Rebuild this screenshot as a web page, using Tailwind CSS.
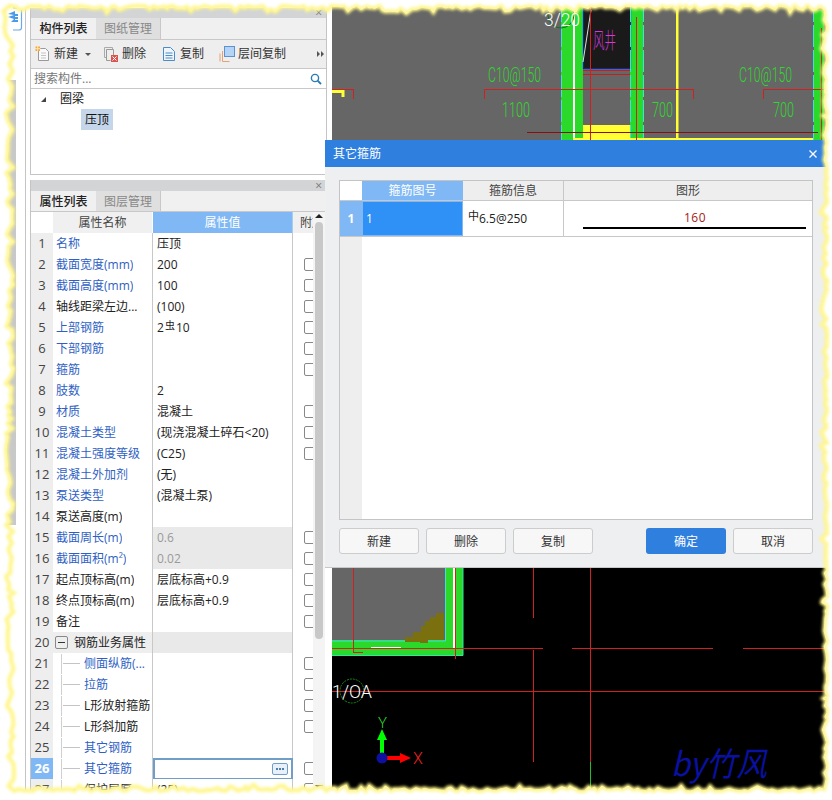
<!DOCTYPE html>
<html lang="en">
<head>
<meta charset="UTF-8">
<title>其它箍筋</title>
<script src="https://cdn.jsdelivr.net/npm/@tailwindcss/browser@4"></script>
</head>
<body class="bg-white">
<div class="relative w-[832px] h-[800px] overflow-hidden bg-white flex text-[12px] text-[#222] font-['Open_Sans','Noto_Sans_CJK_SC',sans-serif]">

    <!-- left strip -->
    <div class="w-[30px] shrink-0">
        <div class="w-[26px] h-[800px] border-r border-[#c4c4c4] flex flex-col">
            <svg width="25" height="32" viewBox="0 0 25 32" class="shrink-0">
                <path d="M13 8h6q2.500 0 2.500 2.500v17q0 2.500-2.500 2.500h-6" fill="#fff" stroke="#6aa8e8" stroke-width="1.200"/>
                <path d="M8 14l7-3v3h3v2h-3v1h3v2h-3v1h3v2h-7l3-3-6-2 6-2z" fill="#4a9be8"/>
            </svg>
            <div class="mt-[48px] w-[16px] h-[445px] bg-[#c8c8c8]"></div>
        </div>
    </div>

    <!-- panels -->
    <div class="w-[297px] shrink-0 pt-[8px] flex flex-col">
        <!-- component list -->
        <div class="h-[167px] border-x border-b border-[#c4c4c4] flex flex-col">
            <div class="h-[10px] bg-[#d2d4d6] flex items-center justify-end pr-[4px] text-[#777] text-[12px] leading-none">×</div>
            <div class="h-[22px] bg-[#f0f0f0] border-b border-[#c8c8c8] flex">
                <div class="w-[65px] flex items-center justify-center font-medium text-[#222]">构件列表</div>
                <div class="w-[65px] flex items-center justify-center bg-[#dfdfdf] text-[#888] border-r border-[#c8c8c8]">图纸管理</div>
            </div>
            <div class="h-[29px] bg-[#eeeeee] border-b border-[#c8c8c8] flex items-center pl-[4px] text-[#333] whitespace-nowrap">
                <svg width="16" height="16" viewBox="0 0 16 16" class="shrink-0">
                    <path d="M3.500 2.500h7l3 3v9h-10z" fill="#fafafa" stroke="#9a9a9a"/>
                    <path d="M6 7h5M6 9.500h5M6 12h5" stroke="#c4c4c4"/>
                    <rect x="0.500" y="0.500" width="4.500" height="4.500" fill="#f2a640"/>
                    <path d="M2.700 0v5.500M0 2.700h5.500" stroke="#ffe9b0"/>
                </svg>
                <span class="ml-[3px]">新建</span>
                <span class="ml-[7px] w-0 h-0 border-x-[3px] border-x-transparent border-t-[3px] border-t-[#555]"></span>
                <svg width="16" height="16" viewBox="0 0 16 16" class="ml-[12px] shrink-0">
                    <path d="M1.500 1.500h8v2M1.500 1.500v10h2" fill="none" stroke="#aaa"/>
                    <path d="M3.500 3.500h7v6M3.500 3.500v11h4" fill="none" stroke="#999"/>
                    <rect x="8" y="9" width="7" height="7" fill="#d9534f"/>
                    <path d="M9.500 10.500l4 4M13.500 10.500l-4 4" stroke="#fff"/>
                </svg>
                <span class="ml-[3px]">删除</span>
                <svg width="14" height="16" viewBox="0 0 14 16" class="ml-[16px] shrink-0">
                    <path d="M1.500 1.500h7l4 4v9h-11z" fill="#eef5fc" stroke="#4a8cc4"/>
                    <path d="M3.500 7h7M3.500 9.500h7M3.500 12h7" stroke="#4a8cc4"/>
                </svg>
                <span class="ml-[4px]">复制</span>
                <svg width="16" height="16" viewBox="0 0 16 16" class="ml-[15px] shrink-0">
                    <path d="M3.500 5v10.500h7" fill="none" stroke="#e8a070"/>
                    <path d="M1 7.500v8" stroke="#e8a070"/>
                    <rect x="5.500" y="0.500" width="10" height="10" fill="#b5d3f5" stroke="#5a94d0"/>
                </svg>
                <span class="ml-[3px]">层间复制</span>
                <span class="ml-[31px] flex gap-[1px]">
                    <span class="w-0 h-0 border-y-[3px] border-y-transparent border-l-[3px] border-l-[#555]"></span>
                    <span class="w-0 h-0 border-y-[3px] border-y-transparent border-l-[3px] border-l-[#555]"></span>
                </span>
            </div>
            <div class="h-[20px] bg-white border-b border-[#c8c8c8] flex items-center justify-between pl-[3px] pr-[4px] pt-[1px] text-[#777]">
                <span>搜索构件...</span>
                <svg width="12" height="12" viewBox="0 0 12 12">
                    <circle cx="5" cy="5" r="3.600" fill="none" stroke="#2a7ab5" stroke-width="1.400"/>
                    <path d="M7.600 7.600l3.400 3.400" stroke="#2a7ab5" stroke-width="1.800"/>
                </svg>
            </div>
            <div class="flex-1 bg-white">
                <div class="h-[20px] flex items-center pl-[10px]">
                    <span class="w-0 h-0 border-l-[5px] border-l-transparent border-b-[5px] border-b-[#444]"></span>
                    <span class="ml-[14px] text-[#111]">圈梁</span>
                </div>
                <div class="pl-[50px]">
                    <span class="inline-flex items-center h-[21px] px-[4px] bg-[#c6d6ea] text-[#111]">压顶</span>
                </div>
            </div>
        </div>

        <!-- property list -->
        <div class="mt-[5px] mr-[2px] border-l border-[#c4c4c4] flex flex-col">
            <div class="h-[11px] bg-[#d2d4d6] flex items-center justify-end pr-[3px] text-[#777] text-[12px] leading-none">×</div>
            <div class="h-[21px] bg-[#f0f0f0] border-b border-[#c8c8c8] flex">
                <div class="w-[65px] pt-[1px] flex items-center justify-center font-medium text-[#222]">属性列表</div>
                <div class="w-[65px] pt-[1px] flex items-center justify-center bg-[#dfdfdf] text-[#888] border-r border-[#c8c8c8]">图层管理</div>
            </div>
            <div class="flex">
                <div class="w-[282px] shrink-0">
                    <div class="h-[21px] grid grid-cols-[22px_100px_140px_20px] bg-white">
                        <div></div>
                        <div class="pt-[1px] bg-[#f0f0f0] border-r border-white flex items-center justify-center text-[#444]">属性名称</div>
                        <div class="pt-[1px] bg-[#7fb8f5] border-r border-[#a8cdf3] flex items-center justify-center text-white">属性值</div>
                        <div class="pt-[1px] bg-[#f0f0f0] overflow-hidden pl-[7px] flex items-center whitespace-nowrap text-[#444]">附加</div>
                    </div>
                    <div id="rows"></div>
                </div>
                <div class="w-[12px] bg-[#f4f4f4] flex flex-col items-center relative">
                    <span class="mt-[2px] w-0 h-0 border-x-[4px] border-x-transparent border-b-[4px] border-b-[#222]"></span>
                    <div class="mt-[4px] w-[8px] h-[417px] rounded-[4px] bg-[#c8c8c8]"></div>
                    <span class="mt-[146px] w-0 h-0 border-x-[4px] border-x-transparent border-t-[4px] border-t-[#222]"></span>
                </div>
            </div>
        </div>
    </div>

    <!-- CAD canvas -->
    <div class="ml-[5px] flex-1 bg-black">
        <svg width="500" height="800" viewBox="332 0 500 800" class="block" font-family="Roboto, sans-serif" font-weight="300">
            <rect x="332" y="0" width="500" height="140" fill="#666"/>
            <rect x="332" y="560" width="113" height="80" fill="#666"/>

            <!-- shaft -->
            <rect x="561" y="0" width="22" height="140" fill="#2ad92a"/>
            <rect x="630" y="0" width="13" height="140" fill="#2ad92a"/>
            <rect x="583" y="0" width="47" height="68" fill="#1a1a1a"/>
            <path d="M583.500 0v68.500h47V0" fill="none" stroke="#1020c0" stroke-width="1.200"/>
            <rect x="583" y="70" width="47" height="1" fill="#c02020"/>
            <rect x="583" y="74" width="47" height="1" fill="#c02020"/>
            <rect x="583" y="125" width="47" height="15" fill="#ffff33"/>
            <rect x="573" y="0" width="2" height="140" fill="#fff"/>
            <path d="M561.500 0v140M630.500 0v140M643.500 0v140M813.500 0v140" stroke="#3fe0e0" stroke-dasharray="22 3"/>
            <rect x="814" y="10" width="10" height="130" fill="#2ad92a"/>
            <path d="M583 62l8-52" stroke="#ddd"/>
            <rect x="676" y="0" width="2.500" height="140" fill="#ffff33"/>
            <rect x="573" y="138" width="240" height="2" fill="#ffff33"/>
            <g fill="#d02020">
                <rect x="590" y="0" width="1" height="140"/>
                <rect x="636" y="17" width="1" height="123"/>
                <rect x="821" y="28" width="1" height="112"/>
                <rect x="527" y="132" width="291" height="1" fill="#8a1010"/>
                <rect x="484" y="89" width="210" height="1"/>
                <rect x="484" y="89" width="1" height="10"/>
                <rect x="693" y="89" width="1" height="10"/>
                <rect x="763" y="89" width="69" height="1"/>
                <rect x="763" y="89" width="1" height="10"/>
                <rect x="332" y="89" width="22" height="1"/>
                <rect x="353" y="89" width="1" height="10"/>
            </g>
            <path d="M332 91.500h11v5.500" fill="none" stroke="#ffff33" stroke-width="3"/>
            <g fill="#2fd82f" font-size="21">
                <text x="488" y="82" textLength="53" lengthAdjust="spacingAndGlyphs">C10@150</text>
                <text x="739" y="82" textLength="53" lengthAdjust="spacingAndGlyphs">C10@150</text>
                <text x="502" y="117" textLength="28" lengthAdjust="spacingAndGlyphs">1100</text>
                <text x="652" y="117" textLength="21" lengthAdjust="spacingAndGlyphs">700</text>
                <text x="773" y="117" textLength="21" lengthAdjust="spacingAndGlyphs">700</text>
            </g>
            <text x="593" y="48" fill="#d838d8" font-size="22" font-family="Noto Sans CJK SC" font-weight="300" textLength="23" lengthAdjust="spacingAndGlyphs">风井</text>
            <circle cx="561" cy="15" r="13" fill="none" stroke="#1c6c1c"/>
            <text x="544" y="26" fill="#fff" font-size="19" textLength="36" lengthAdjust="spacingAndGlyphs">3/20</text>

            <!-- lower part -->
            <path d="M445 568h18v87.500H332V640h113z" fill="#2ad92a"/>
            <path d="M445.500 568v73H332" fill="none" stroke="#3fe0e0"/>
            <rect x="453" y="568" width="2" height="80" fill="#fff"/>
            <path d="M332 655.500h131V568" fill="none" stroke="#30e8a0"/>
            <rect x="371" y="647" width="30" height="2" fill="#fff"/>
            <path d="M405 642v-5h8v-5h8v-6h4v-5h5v-4h6v-4h8v27h-16v3h-8v-1z" fill="#7a7010"/>
            <g fill="#d02020">
                <rect x="353" y="568" width="1" height="85"/>
                <rect x="353" y="652" width="10" height="1"/>
                <rect x="455" y="568" width="1" height="91"/>
                <rect x="533" y="568" width="1" height="50"/>
                <rect x="533" y="650" width="1" height="112"/>
                <rect x="590" y="568" width="1" height="194"/>
                <rect x="332" y="648" width="211" height="1"/>
                <rect x="572" y="648" width="141" height="1"/>
                <rect x="743" y="648" width="82" height="1"/>
                <rect x="332" y="691" width="493" height="1"/>
            </g>
            <rect x="590" y="762" width="1" height="38" fill="#20c020"/>
            <circle cx="590.500" cy="800" r="10" fill="none" stroke="#188018"/>

            <circle cx="352" cy="691" r="12" fill="none" stroke="#1c8c1c" stroke-dasharray="2 1"/>
            <text x="332" y="698" fill="#fff" font-size="19" textLength="40" lengthAdjust="spacingAndGlyphs">1/OA</text>

            <!-- axes -->
            <path d="M382 758v-22" stroke="#0f0" stroke-width="4"/>
            <path d="M382 729l5 11h-10z" fill="#0f0"/>
            <path d="M382 758h20" stroke="#f00" stroke-width="4"/>
            <path d="M411 758l-11-5v10z" fill="#f00"/>
            <circle cx="382" cy="758" r="5.500" fill="#1010a0"/>
            <text x="378" y="728" fill="#2fd82f" font-size="15">Y</text>
            <text x="413" y="764" fill="#f02020" font-size="16">X</text>

            <text x="671" y="776" fill="#0a10a0" font-size="33" font-style="italic" font-family="Noto Sans CJK SC" font-weight="400" textLength="96" lengthAdjust="spacingAndGlyphs">by竹风</text>
        </svg>
    </div>

    <!-- dialog -->
    <div class="absolute left-[325px] top-[140px] w-[507px] h-[428px] bg-[#eeeff0] border-b border-[#c8c8c8] flex flex-col">
        <div class="h-[27px] bg-[#2f7fdf] flex items-center justify-between pl-[8px] pr-[14px] text-white">
            <span>其它箍筋</span>
            <svg width="10" height="10" viewBox="0 0 10 10"><path d="M1.500 1.500l7 7M8.500 1.500l-7 7" stroke="#fff" stroke-width="1.300"/></svg>
        </div>
        <div class="pt-[13px] pl-[14px] pr-[19px]">
            <div class="w-[474px] h-[340px] border border-[#c4c4c4] bg-white flex flex-col">
                <div class="h-[20px] grid grid-cols-[22px_101px_101px_1fr] border-b border-[#c8c8c8]">
                    <div class="bg-white"></div>
                    <div class="bg-[#7fb8f5] flex items-center justify-center text-white">箍筋图号</div>
                    <div class="bg-[#eeeeee] border-r border-[#c8c8c8] flex items-center justify-center text-[#444]">箍筋信息</div>
                    <div class="bg-[#eeeeee] flex items-center justify-center text-[#444]">图形</div>
                </div>
                <div class="h-[36px] grid grid-cols-[22px_101px_101px_1fr] border-b border-[#c8c8c8]">
                    <div class="bg-[#7fb8f5] flex items-center justify-center text-white font-bold">1</div>
                    <div class="bg-[#2f90f5] border border-[#7fb8f5] flex items-center pl-[3px] text-white">1</div>
                    <div class="border-r border-[#c8c8c8] flex items-center pl-[5px] text-[#222]"><span class="text-[11px] -translate-y-[2px]">中</span><span>6.5@250</span></div>
                    <div class="flex flex-col items-center pt-[9px]">
                        <span class="text-[#a52020] tracking-[0.5px] ml-[14px] leading-[16px]">160</span>
                        <div class="mt-[1px] ml-[13px] w-[223px] h-[2px] bg-black"></div>
                    </div>
                </div>
                <div class="flex-1 flex">
                    <div class="w-[22px] bg-[#eeeeee]"></div>
                    <div class="flex-1 bg-white"></div>
                </div>
            </div>
            <div class="mt-[8px] flex gap-[7px] text-[#333]">
                <button class="w-[80px] h-[26px] pt-[1px] bg-[#f7f7f7] border border-[#ccc] rounded-[3px]">新建</button>
                <button class="w-[80px] h-[26px] pt-[1px] bg-[#f7f7f7] border border-[#ccc] rounded-[3px]">删除</button>
                <button class="w-[80px] h-[26px] pt-[1px] bg-[#f7f7f7] border border-[#ccc] rounded-[3px]">复制</button>
                <button class="ml-[46px] w-[80px] h-[26px] pt-[1px] bg-[#2f7fdf] text-white rounded-[3px]">确定</button>
                <button class="w-[80px] h-[26px] pt-[1px] bg-[#f7f7f7] border border-[#ccc] rounded-[3px]">取消</button>
            </div>
        </div>
    </div>

    <!-- torn paper edge -->
    <svg id="edge" width="832" height="800" viewBox="0 0 832 800" class="absolute left-0 top-0 pointer-events-none">
        <defs><filter id="glow" x="-5%" y="-5%" width="110%" height="110%"><feGaussianBlur stdDeviation="1.500"/></filter></defs>
        <path id="paper" fill="#fff" fill-rule="evenodd"/>
        <path id="glowLine" fill="none" stroke="#fff68a" stroke-width="4" filter="url(#glow)"/>
        <path id="line" fill="none" stroke="#fff8a0" stroke-width="1"/>
    </svg>
</div>

<script>
    const B = 'text-[#2f5fc4]';
    const K = 'text-[#222]';
    const rebar = '2<span class="text-[10px] -translate-y-[2px] inline-block mx-[1px]">虫</span>10';
    const rows = [
        ['名称', B, '压顶', 0], ['截面宽度(mm)', B, '200', 1], ['截面高度(mm)', B, '100', 1],
        ['轴线距梁左边...', K, '(100)', 1], ['上部钢筋', B, rebar, 1], ['下部钢筋', B, '', 1],
        ['箍筋', B, '', 1], ['肢数', B, '2', 0], ['材质', B, '混凝土', 1],
        ['混凝土类型', B, '(现浇混凝土碎石&lt;20)', 1], ['混凝土强度等级', B, '(C25)', 1], ['混凝土外加剂', B, '(无)', 0],
        ['泵送类型', B, '(混凝土泵)', 0], ['泵送高度(m)', K, '', 0], ['截面周长(m)', B, '0.6', 1],
        ['截面面积(m²)', B, '0.02', 1], ['起点顶标高(m)', K, '层底标高+0.9', 1], ['终点顶标高(m)', K, '层底标高+0.9', 1],
        ['备注', K, '', 1], ['钢筋业务属性', K, '', 0], ['侧面纵筋(...', B, '', 1],
        ['拉筋', B, '', 1], ['L形放射箍筋', K, '', 1], ['L形斜加筋', K, '', 1],
        ['其它钢筋', B, '', 0], ['其它箍筋', B, '', 1], ['保护层厚...', K, '(25)', 1]
    ];
    let html = '';
    rows.forEach((r, i) => {
        const n = i + 1;
        const numCell = n === 26
            ? 'bg-[#7fb8f5] text-white font-bold border-[#7fb8f5]'
            : 'bg-[#eeeeee] text-[#444] border-[#c8c8c8]';
        const greyValue = n === 15 || n === 16;
        const nameBg = n === 20 ? 'bg-[#eeeeee]' : 'bg-white';
        const valueBg = n === 20 || greyValue ? 'bg-[#e9e9e9] text-[#999]' : 'bg-white text-[#222]';
        let name = `<span class="pl-[3px] truncate ${r[1]}">${r[0]}</span>`;
        if (n === 20) {
            name = `<span class="ml-[2px] w-[13px] h-[13px] border border-[#888] rounded-[2px] flex items-center justify-center shrink-0"><span class="w-[7px] h-px bg-[#333]"></span></span><span class="ml-[6px] ${r[1]}">${r[0]}</span>`;
        } else if (n > 20) {
            name = `<span class="ml-[8px] w-[23px] h-[20px] border-l border-[#d0d0d0] flex items-center shrink-0"><span class="ml-[1px] w-[17px] h-px bg-[#c4c4c4]"></span></span><span class="whitespace-nowrap ${r[1]}">${r[0]}</span>`;
        }
        let value = `<div class="px-[4px] pt-[1px] flex items-center border-r border-b border-[#c8c8c8] ${valueBg}">${r[2]}</div>`;
        if (n === 26) {
            value = `<div class="border-2 border-[#6f9fc8] bg-white flex items-center justify-end pr-[3px]"><span class="w-[16px] h-[12px] border border-[#6f9fc8] rounded-[2px] bg-[#e8f1fa] flex items-center justify-center gap-px"><span class="w-[2px] h-[2px] bg-[#4a7fb0]"></span><span class="w-[2px] h-[2px] bg-[#4a7fb0]"></span><span class="w-[2px] h-[2px] bg-[#4a7fb0]"></span></span></div>`;
        }
        const box = r[3] ? '<span class="ml-[11px] w-[13px] h-[13px] shrink-0 border border-[#888] rounded-[2px] bg-white"></span>' : '';
        html += `<div class="h-[21px] grid grid-cols-[22px_100px_140px_20px]">
            <div class="pt-[1px] flex items-center justify-center border-b text-[13px] ${numCell}">${n}</div>
            <div class="pt-[1px] flex items-center overflow-hidden border-r border-b border-[#c8c8c8] ${nameBg}">${name}</div>
            ${value}
            <div class="flex items-center overflow-hidden bg-white border-b border-[#c8c8c8]">${box}</div>
        </div>`;
    });
    document.getElementById('rows').innerHTML = html;

    // jagged torn edge, fixed seed so it stays the same between runs
    let seed = 17;
    const rnd = () => (seed = (seed * 16807) % 2147483647) / 2147483647;
    const pts = [];
    for (let x = 9; x < 824; x += 2 + rnd() * 4) pts.push([x, 6 + rnd() * rnd() * 8]);
    for (let y = 10; y < 786; y += 2 + rnd() * 5) pts.push([827 - rnd() * rnd() * 7, y]);
    for (let x = 824; x > 10; x -= 2 + rnd() * 4) pts.push([x, 791 - rnd() * rnd() * 7]);
    for (let y = 786; y > 10; y -= 3 + rnd() * 6) pts.push(y < 36 ? [3 + rnd() * 3, y] : [6 + rnd() * 8, y]);
    const d = 'M' + pts.map(p => p[0].toFixed(1) + ' ' + p[1].toFixed(1)).join('L') + 'Z';
    document.getElementById('paper').setAttribute('d', 'M0 0H832V800H0Z' + d);
    document.getElementById('glowLine').setAttribute('d', d);
    document.getElementById('line').setAttribute('d', d);
</script>
</body>
</html>
